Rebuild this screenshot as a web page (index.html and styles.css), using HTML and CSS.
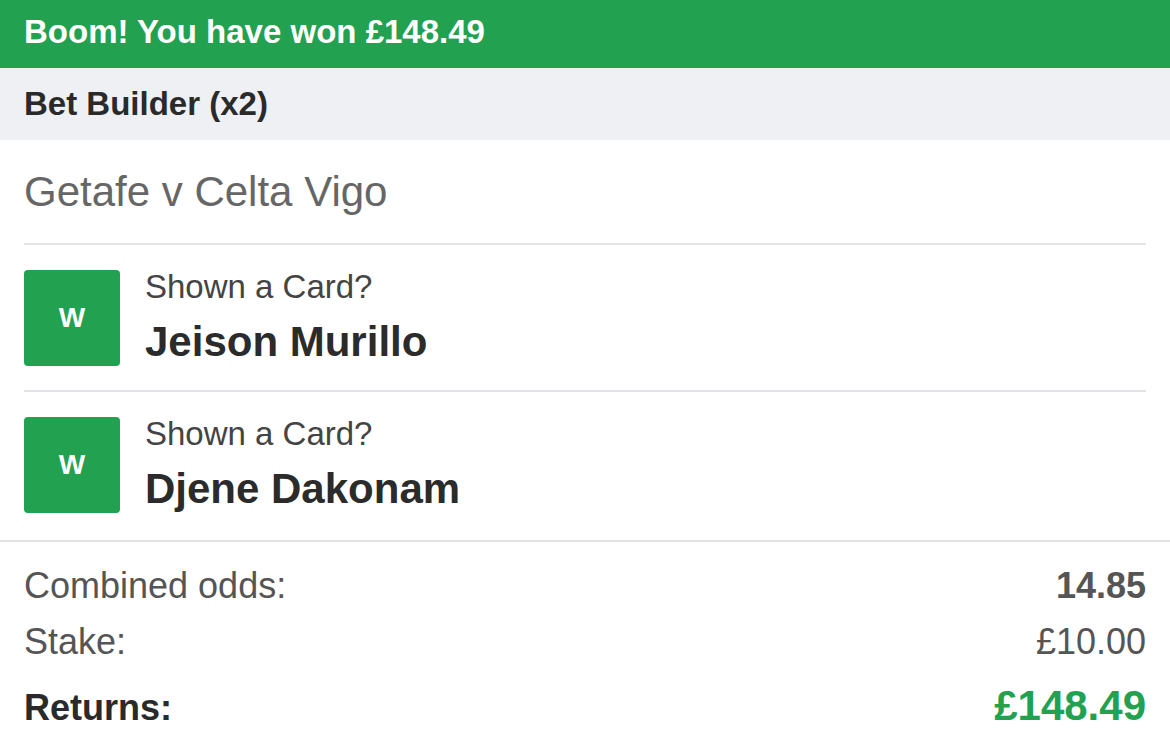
FILE: index.html
```html
<!DOCTYPE html>
<html lang="en">
<head>
    <meta charset="UTF-8">
    <meta name="viewport" content="width=device-width, initial-scale=1.0">
    <title>Settled Bet</title>
    <link rel="stylesheet" href="styles.css">
</head>
<body>
    <div class="banner">Boom! You have won £148.49</div>
    <div class="bet-type">Bet Builder (x2)</div>

    <div class="event">
        <div class="event-title">Getafe v Celta Vigo</div>

        <div class="selection">
            <div class="result">W</div>
            <div class="selection-info">
                <div class="market">Shown a Card?</div>
                <div class="player">Jeison Murillo</div>
            </div>
        </div>

        <div class="selection">
            <div class="result">W</div>
            <div class="selection-info">
                <div class="market">Shown a Card?</div>
                <div class="player">Djene Dakonam</div>
            </div>
        </div>
    </div>

    <div class="summary">
        <div class="summary-row">
            <span>Combined odds:</span>
            <span class="odds">14.85</span>
        </div>
        <div class="summary-row">
            <span>Stake:</span>
            <span>£10.00</span>
        </div>
        <div class="summary-row returns">
            <span>Returns:</span>
            <span class="returns-value">£148.49</span>
        </div>
    </div>
</body>
</html>
```

FILE: styles.css
```css
body{
  margin:0;
  background:white;
  font-family:"Liberation Sans", Arial, sans-serif;
  color:#555;
}
.banner{
  height:68px;
  padding:0 24px 4px;
  box-sizing:border-box;
  display:flex;
  align-items:center;
  background-color:#22a150;
  color:white;
  font-size:33px;
  font-weight:bold;
}
.bet-type{
  height:72px;
  padding:0 24px;
  display:flex;
  align-items:center;
  background-color:#eff0f4;
  color:#2a2a2a;
  font-size:33px;
  font-weight:bold;
}
.event{
  padding:0 24px;
}
.event-title{
  height:103px;
  display:flex;
  align-items:center;
  font-size:42px;
  color:#666;
}
.selection{
  display:flex;
  gap:25px;
  padding:25px 0 24px;
  border-top:2px solid #e4e4e8;
}
.selection:last-child{
  padding-bottom:27px;
}
.result{
  width:96px;
  height:96px;
  flex-shrink:0;
  border-radius:4px;
  background-color:#22a150;
  color:white;
  font-size:28px;
  font-weight:bold;
  display:flex;
  align-items:center;
  justify-content:center;
}
.selection-info{
  display:flex;
  flex-direction:column;
  height:96px;
}
.market{
  font-size:33px;
  color:#444;
  line-height:38px;
  margin-top:-2px;
}
.player{
  font-size:42px;
  font-weight:bold;
  color:#2b2b2b;
  line-height:48px;
  margin-top:12px;
}
.summary{
  border-top:2px solid #e4e4e8;
  padding:16px 24px 12px;
}
.summary-row{
  display:flex;
  justify-content:space-between;
  align-items:baseline;
  font-size:36px;
  line-height:56px;
  color:#555;
}
.odds{
  font-weight:bold;
}
.returns{
  font-weight:bold;
  color:#2a2a2a;
  line-height:72px;
}
.returns-value{
  color:#22a150;
  font-size:42px;
}
```
